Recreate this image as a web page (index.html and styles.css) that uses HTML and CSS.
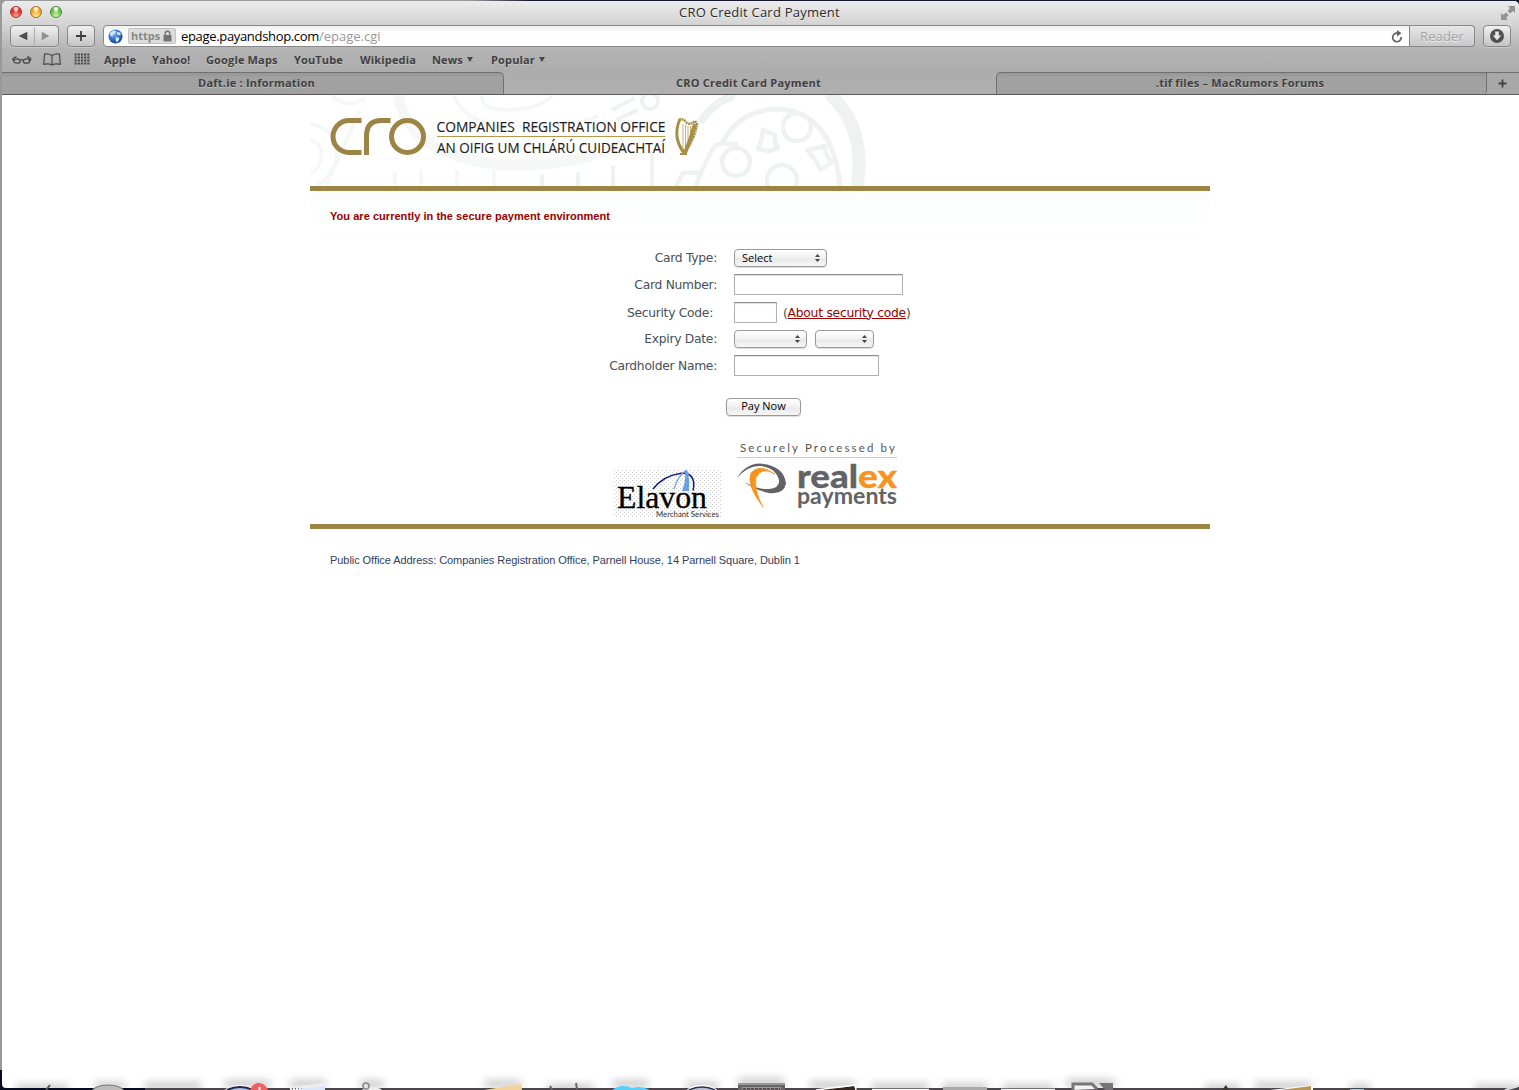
FILE: index.html
```html
<!DOCTYPE html>
<html lang="en">
<head>
<meta charset="utf-8">
<title>CRO Credit Card Payment</title>
<link rel="stylesheet" href="styles.css">
</head>
<body>
<div class="desktop">
<div class="window">
  <header class="chrome">
    <div class="titlebar">
      <div class="lights"><i class="light red"></i><i class="light amber"></i><i class="light green"></i></div>
      <div class="title">CRO Credit Card Payment</div>
      <svg class="expand" width="16" height="16" viewBox="0 0 16 16"><path d="M8 1h7v7l-2-2-3 2.500-2.500-2.500 2.500-3zM1 15V8l2 2 3-2.500L8.500 10 6 13l2 2z" fill="#929292"/></svg>
    </div>
    <div class="toolbar">
      <div class="btn nav">
        <svg width="49" height="20" viewBox="0 0 49 20"><path d="M8 10l9-4.500v9z" fill="#4c4c4c"/><path d="M24.500 1v18" stroke="#aaa"/><path d="M40 10l-8-4.500v9z" fill="#909090"/></svg>
      </div>
      <div class="btn add"><svg width="12" height="12" viewBox="0 0 12 12"><path d="M6 1v10M1 6h10" stroke="#3d3d3d" stroke-width="1.800"/></svg></div>
      <div class="address">
        <svg class="globe" width="15" height="15" viewBox="0 0 15 15"><defs><radialGradient id="gl" cx=".4" cy=".3" r=".75"><stop offset="0" stop-color="#8ab8ee"/><stop offset=".5" stop-color="#3478cf"/><stop offset="1" stop-color="#123a91"/></radialGradient></defs><circle cx="7.500" cy="7.500" r="7" fill="url(#gl)"/><path d="M2 4l3-2.500 3 .5-1 2.500-2 1-.5 2L2.500 7zM9 3l3 .5 1 2-2 1-2-1.500zM8 8l3.500 1-1 2.500-1.500 2L7.500 11z" fill="#d3e6fc"/></svg>
        <span class="secure">https <svg width="9" height="12" viewBox="0 0 9 12"><path d="M2.200 6V3.600a2.300 2.300 0 0 1 4.600 0V6" fill="none" stroke="#737373" stroke-width="1.400"/><rect x=".5" y="5" width="8" height="6.500" rx=".7" fill="#737373"/></svg></span>
        <span class="url">epage.payandshop.com<em>/epage.cgi</em></span>
        <svg class="reload" width="12" height="13" viewBox="0 0 12 13"><path d="M10.200 7A4.300 4.300 0 1 1 6.500 3.200" fill="none" stroke="#626262" stroke-width="1.700"/><path d="M6 0l4.500 3.200L6 6.400z" fill="#626262"/></svg>
      </div>
      <div class="reader">Reader</div>
      <div class="btn download"><svg width="16" height="16" viewBox="0 0 16 16"><circle cx="8" cy="8" r="7" fill="#515151"/><path d="M6.200 3.500h3.600v4h2.400L8 12.300 3.800 7.500h2.400z" fill="#e6e6e6"/></svg></div>
    </div>
    <nav class="bookmarks">
      <svg width="20" height="11" viewBox="0 0 20 11" fill="none" stroke="#484848" stroke-width="1.300"><ellipse cx="5" cy="7" rx="3.200" ry="2.200"/><ellipse cx="14.500" cy="7" rx="3.200" ry="2.200"/><path d="M8.300 6.200q1.500-1 3 0M1.700 6.500L.5 5.500Q2 3 4.500 3M17.800 6.500l1-1Q18 3 15 3"/></svg>
      <svg width="18" height="13" viewBox="0 0 18 13" fill="none" stroke="#484848" stroke-width="1.200"><path d="M9 2.500Q5 .3 1.500 1.200L.8 11.300Q5.500 10 9 12q3.500-2 8.200-.7L16.500 1.200Q13 .3 9 2.500zV12"/></svg>
      <svg width="16" height="12" viewBox="0 0 16 12"><path d="M.5 1.500h15M.5 4.500h15M.5 7.500h15M.5 10.500h15" stroke="#484848" stroke-width="2" stroke-dasharray="2.200 1"/></svg>
      <a>Apple</a><a>Yahoo!</a><a>Google Maps</a><a>YouTube</a><a>Wikipedia</a><a>News <b></b></a><a>Popular <b></b></a>
    </nav>
    <div class="tabs">
      <div class="tab left">Daft.ie : Information</div>
      <div class="tab active">CRO Credit Card Payment</div>
      <div class="tab right">.tif files – MacRumors Forums</div>
      <div class="tab plus"><svg width="9" height="9" viewBox="0 0 9 9"><path d="M4.500 .5v8M.5 4.500h8" stroke="#444" stroke-width="1.800"/></svg></div>
    </div>
  </header>
  <main class="page">
    <section class="banner">
      <svg width="900" height="91" viewBox="310 95 900 91">
        <g fill="none" stroke="#eef3f2">
          <g stroke-width="4" opacity=".55">
            <path d="M395 172v14M421 170v16M457 170v16M494 170v16"/>
            <path d="M310 124q26 4 27 30-2 20-20 32M310 140q14 4 11 20-2 10-11 14M360 110l-34 76M333 96q12 14 32 3"/>
            <path d="M454 96q10 26 48 30 60 4 96-10M482 96q0 14 25 14 30 0 45-14"/>
            <path d="M398 95q12 62 106 70 70 2 120-22" stroke-width="11"/>
          </g>
          <g stroke-width="4"><path d="M542 174v12M578 172v14M613 166v20M652 152v34M612 110l22-12M616 120l22-10"/><circle cx="650" cy="101" r="8"/></g>
          <path d="M829 93q38 36 28 93" stroke-width="13"/>
          <path d="M700 122q12-18 34-27" stroke-width="8"/>
          <path d="M676 186l7-13h18l-5 13M698 178l14-28q3-6 9-6h17" stroke-width="4.500"/>
          <path d="M722 144q15-32 52-35 58 0 66 77" stroke-width="5"/>
          <g stroke-width="4.500"><circle cx="797" cy="127" r="14"/><circle cx="736" cy="162" r="14"/><circle cx="782" cy="180" r="15"/><path d="M763 130l12 5q-1 7 3 13l-9 3-11-2q4-8 5-19zM807 150l18-4q0 10 7 16l-12 8q-3-10-13-20z" stroke-linejoin="round"/></g>
        </g>
        <g fill="none" stroke="#9c8544" stroke-width="5"><path d="M361.500 120.500H349a16 16 0 0 0 0 32h12.500M366.500 155v-19q0-15.500 15-15.500h9"/><circle cx="407.500" cy="136.500" r="16"/></g>
        <path d="M437 136.500h228.500" stroke="#b59a4e" stroke-width="1.200"/>
        <g class="cro-name"><text x="436.500" y="131.500" textLength="229" lengthAdjust="spacingAndGlyphs" xml:space="preserve">COMPANIES  REGISTRATION OFFICE</text><text x="437" y="152.500" textLength="228" lengthAdjust="spacingAndGlyphs">AN OIFIG UM CHLÁRÚ CUIDEACHTAÍ</text></g>
        <g fill="none" stroke="#a98f46"><path d="M680 119q-8 18 4 34" stroke-width="3"/><path d="M679 120q4-2 7 2t9-1l2 3q-2 14-12 28" stroke-width="2.500" stroke-dasharray="2 .6"/><path d="M695 124q-4 15-10 29" stroke-width="4"/><path d="M683 124v26M685.500 125v26M688 126v20M690.500 126v14" stroke-width=".7"/><path d="M680 154h7" stroke-width="2"/></g>
      </svg>
    </section>
    <p class="notice">You are currently in the secure payment environment</p>
    <form class="pay">
      <div class="fields">
        <label>Card Type:</label><div><span class="select type"><span>Select</span><svg width="5" height="8" viewBox="0 0 5 8"><path d="M2.500 0L5 3H0zM2.500 8L0 5h5z" fill="#454545"/></svg></span></div>
        <label>Card Number:</label><div><input class="number" type="text"></div>
        <label class="code-label">Security Code:</label><div><input class="code" type="text"><span class="about">(<a>About security code</a>)</span></div>
        <label>Expiry Date:</label><div><span class="select month"><span></span><svg width="5" height="8" viewBox="0 0 5 8"><path d="M2.500 0L5 3H0zM2.500 8L0 5h5z" fill="#454545"/></svg></span><span class="select year"><span></span><svg width="5" height="8" viewBox="0 0 5 8"><path d="M2.500 0L5 3H0zM2.500 8L0 5h5z" fill="#454545"/></svg></span></div>
        <label>Cardholder Name:</label><div><input class="holder" type="text"></div>
      </div>
      <button class="submit" type="button">Pay Now</button>
    </form>
    <div class="partners">
      <svg width="107" height="50" viewBox="614 469 107 50">
        <defs><pattern id="dots" width="4" height="4" patternUnits="userSpaceOnUse"><path d="M0 0h1v1H0zM2 2h1v1H2z" fill="#cdcdcd"/></pattern></defs>
        <rect x="614" y="469" width="107" height="49" fill="url(#dots)"/>
        <path d="M653 489q10-13 27-15.500 9-1 12 4 3 5 1 13" fill="none" stroke="#141b86" stroke-width="1.500"/>
        <path d="M674 489q4-14 13-19" fill="none" stroke="#6b9fe4" stroke-width="1.300"/>
        <path d="M684 471q3-2 4 1 2 9 1 19h-7q4-10 3-18z" fill="#6b9fe4"/>
        <text class="elavon" x="617" y="508" textLength="90" lengthAdjust="spacingAndGlyphs">Elavon</text>
        <text class="merchant" x="656" y="516.500" textLength="63" lengthAdjust="spacingAndGlyphs">Merchant Services</text>
      </svg>
      <svg width="162" height="72" viewBox="737 440 162 72">
        <text class="processed" x="740" y="452" textLength="156">Securely Processed by</text>
        <path d="M737 457.500h160" stroke="#ccc"/>
        <path d="M737 478q8-14 23-14.500 24 2 26 20-2 11-17 9.500-14-3-25-11 15 8 25 7 11-1 10-9-3-12-18-14-13-1-24 12z" fill="#626366"/>
        <path d="M775 474q-14-8-19 4-2 13 7 29-17-22-12-34 8-10 24 1z" fill="#f7931e" stroke="#f7931e" stroke-width=".7"/>
        <g class="realex"><text x="797" y="488" textLength="61" lengthAdjust="spacingAndGlyphs" fill="#626366" stroke="#626366">real</text><text x="858" y="488" textLength="39" lengthAdjust="spacingAndGlyphs" fill="#f7931e" stroke="#f7931e">ex</text></g>
        <text class="payments" x="797" y="504" textLength="100" lengthAdjust="spacingAndGlyphs">payments</text>
      </svg>
    </div>
    <footer class="footer">Public Office Address: Companies Registration Office, Parnell House, 14 Parnell Square, Dublin 1</footer>
  </main>
</div>
<svg class="dock" width="1519" height="30" viewBox="0 1060 1519 30">
  <defs><filter id="soft" x="-20%" y="-200%" width="140%" height="500%"><feGaussianBlur stdDeviation="4"/></filter></defs>
  <path d="M16 1088h52M95 1086h30M145 1086h56M225 1084h45M290 1084h36M360 1084h23M485 1084h36M548 1088h45M613 1084h35M686 1086h32M738 1082h46M810 1085h45M872 1087h56M943 1087h44M1003 1088h50M1067 1083h48M1205 1088h35M1255 1086h57M1350 1088h20M1475 1088h44" stroke="#777" stroke-width="5" opacity=".6" filter="url(#soft)"/>
  <path d="M0 1089h1519" stroke="#49474b" stroke-width="2"/>
  <path d="M0 1089h145" stroke="#080c22" stroke-width="2"/>
  <path d="M46 1090l4-5" stroke="#555" stroke-width="2"/>
  <ellipse cx="108" cy="1093" rx="17" ry="8" fill="#bcbcbc" stroke="#777"/>
  <ellipse cx="240" cy="1094" rx="16" ry="8" fill="#b4c0e8" stroke="#fff" stroke-width="2"/><path d="M227 1090q13-6 26 0" fill="none" stroke="#1c2647" stroke-width="2"/>
  <circle cx="259" cy="1092" r="9" fill="#f15d60"/><path d="M259.500 1087v3" stroke="#fff" stroke-width="2"/>
  <path d="M290 1090l35-5v5z" fill="#dce6fa"/><path d="M290 1089l35-5" stroke="#f4f4f4" stroke-width="3" stroke-dasharray="2 1"/>
  <ellipse cx="372" cy="1092" rx="11" ry="5" fill="#eee"/><circle cx="366" cy="1086" r="3" fill="none" stroke="#888" stroke-width="1.500"/>
  <path d="M484 1090l37-6 1 6z" fill="#f1d39a"/><path d="M550 1086l2 4M576 1083l1 6" stroke="#666" stroke-width="2"/>
  <path d="M612 1090q10-7 20-2 9-3 18 2z" fill="#55d1fa"/>
  <ellipse cx="702" cy="1094" rx="16" ry="8" fill="#b9bed0" stroke="#fff" stroke-width="2"/><path d="M689 1090q13-6 26 0" fill="none" stroke="#29304d" stroke-width="1.500"/>
  <path d="M738 1083h47v7h-47z" fill="#666"/><path d="M738 1084h47M742 1088h39" stroke="#c9cecc"/><path d="M743 1088.500h37" stroke="#543f3f" stroke-dasharray="3 1"/>
  <path d="M822 1090l32-4 2 4z" fill="#342621"/><path d="M816 1090l39-5 1 5" fill="none" stroke="#fff" stroke-width="1.500"/>
  <path d="M872 1089.500h57M1001 1089.500h54" stroke="#f5f5f5" stroke-width="1.500"/><path d="M943 1087h44v3h-44z" fill="#aaa"/>
  <path d="M1073 1090v-6h19l5 5" fill="#f4f4f4" stroke="#777" stroke-width="3"/><path d="M1099 1083h14v7h-8z" fill="#757575"/>
  <path d="M1222 1090l4-5 3 5z" fill="#403832"/><path d="M1270 1090l43-5v5z" fill="#fff"/><path d="M1280 1090l31-4v4z" fill="#b39858"/><path d="M1350 1089.500h14" stroke="#a8cbe4"/>
  <path d="M1505 1090l14-4" stroke="#ddd" stroke-width="2"/>
</svg>
</div>
</body>
</html>
```
FILE: styles.css
```css
* { box-sizing: border-box; }
body { margin: 0; overflow: hidden; background: #777; font-family: "Open Sans", "Noto Sans", sans-serif; }
.desktop { position: relative; height: 1090px; padding: 1px 0 2px 2px; background: linear-gradient(90deg, #9b9b9b 0 470px, #15182e 530px) 0 0 / 100% 5px no-repeat, linear-gradient(#999 0 1070px, #080c22 1070px); }
.window { height: 1087px; border-radius: 5px 5px 4px 4px; overflow: hidden; background: #fff; }
.chrome { height: 94px; background: linear-gradient(#ececec, #d4d4d4 23px, #b4b4b4 48px, #acacac 71px, #b0b0b0); }
.titlebar { height: 24px; display: grid; grid-template-columns: 60px 1fr 60px; align-items: center; }
.lights { display: flex; gap: 8px; padding-left: 8px; margin-top: -2px; }
.light { width: 12px; height: 12px; border-radius: 50%; border: 1px solid #a23b35; background: radial-gradient(ellipse at 50% 10%, #ffd8d6 0 18%, transparent 42%), radial-gradient(circle at 50% 95%, #ffaca0, #e5322f 55%); }
.amber { border-color: #a2702b; background: radial-gradient(ellipse at 50% 10%, #fff1cd 0 18%, transparent 42%), radial-gradient(circle at 50% 95%, #ffef8e, #eda330 60%); }
.green { border-color: #4b8840; background: radial-gradient(ellipse at 50% 10%, #e9ffe2 0 18%, transparent 42%), radial-gradient(circle at 50% 95%, #d4ff9f, #66bc50 60%); }
.title { text-align: center; font-size: 13px; line-height: 22px; letter-spacing: .24px; color: #2c2c2c; text-shadow: 0 1px #eee; padding: 0 2px 2px 0; }
.expand { justify-self: end; margin: -1px 3px 0 0; }
.toolbar { height: 23px; display: flex; padding-left: 8px; align-items: stretch; }
.btn { height: 22px; border: 1px solid #888; border-radius: 4px; background: linear-gradient(#f0f0f0, #c4c4c4); display: flex; align-items: center; justify-content: center; box-shadow: 0 1px #c9c9c9; }
.nav { width: 49px; }
.add { width: 28px; margin: 0 8px; }
.address { width: 1307px; height: 22px; display: flex; align-items: center; background: linear-gradient(#f3f3f3, #fff 8px); border: 1px solid #888; border-radius: 4px 0 0 4px; padding: 0 6px 0 4px; font-size: 13px; }
.secure { height: 16px; width: 48px; margin: 0 5px; padding-left: 2px; border: 1px solid #c2c2c2; border-radius: 2px; background: #ddd; font-size: 11px; line-height: 12px; font-weight: 700; color: #888; display: flex; align-items: center; gap: 3px; }
.url { color: #000; white-space: nowrap; letter-spacing: -.33px; }
.url em { font-style: normal; color: #999; letter-spacing: 0; }
.reload { margin-left: auto; }
.reader { width: 65px; height: 22px; border: 1px solid #888; border-left: 0; border-radius: 0 4px 4px 0; background: linear-gradient(#e6e6e6, #c8c8c8); color: #a3a3a3; text-shadow: 0 1px #eee; font-size: 13px; line-height: 20px; letter-spacing: .15px; text-align: center; }
.download { width: 28px; margin-left: 8px; }
.bookmarks { height: 23px; display: grid; grid-template-columns: 31px 31px 30px 48px 54px 88px 66px 72px 59px 60px; align-items: center; padding: 0 0 1px 10px; font-size: 11px; font-weight: 700; letter-spacing: .15px; color: #404040; text-shadow: 0 1px #c5c5c5; }
.bookmarks a { white-space: nowrap; }
.bookmarks b { display: inline-block; margin: 0 0 2px 1px; border: 3.5px solid transparent; border-top: 5px solid #444; border-bottom: 0; }
.tabs { height: 24px; padding-top: 1px; display: grid; grid-template-columns: 502px 492px 491px 1fr; font-size: 11px; font-weight: 700; letter-spacing: .22px; color: #404040; text-shadow: 0 1px #bfbfbf; border-bottom: 1px solid #5c585b; }
.tab { height: 22px; line-height: 20px; text-align: center; border-top: 1px solid #707070; background: linear-gradient(#969696, #a1a1a1 5px); padding-right: 1px; }
.tab.left { border-right: 1px solid #707070; border-radius: 0 5px 0 0; padding-left: 9px; }
.tab.active { border-color: transparent; background: none; padding-right: 3px; }
.tab.right { border-left: 1px solid #707070; border-right: 1px solid #707070; border-radius: 5px 0 4px 0; padding-right: 3px; }
.tab.plus { background: #a8a8a8; display: flex; align-items: center; justify-content: center; }
.page { width: 900px; margin-left: 308px; }
.banner { height: 96px; border-bottom: 5px solid #9c8544; }
.banner svg { display: block; }
.cro-name { font: 15px "Open Sans", sans-serif; fill: #1c1c1c; stroke: #1c1c1c; stroke-width: .15; }
.notice { height: 54px; margin: 0; padding: 19px 20px 0; background: linear-gradient(#fbfefd, #fff); color: #990000; font: bold 11px/13px "Liberation Sans", sans-serif; letter-spacing: .04px; }
.pay { font: 12.5px "DejaVu Sans", sans-serif; color: #475158; }
.fields { display: grid; grid-template-columns: 407px 1fr; grid-template-rows: 26px 27px 29px 24px 29px; column-gap: 17px; align-items: center; }
.fields label { text-align: right; white-space: nowrap; font-size: 12.3px; letter-spacing: -.28px; }
.fields .code-label { padding-right: 4px; }
.fields > div { display: flex; align-items: center; }
.fields input { height: 21px; border: 1px solid #b0b0b0; border-top-color: #8d8d8d; background: #fff; box-shadow: inset 0 1px 1px #e0e0e0; padding: 0; }
.number { width: 169px; }
.code { width: 43px; }
.holder { width: 145px; }
.about { margin-left: 6px; font-size: 12.3px; letter-spacing: -.24px; white-space: nowrap; }
.about a { color: #900; text-decoration: underline; }
.select { height: 18px; border: 1px solid #999; border-radius: 4px; background: linear-gradient(#fff, #f1f1f1 50%, #e8e8e8 55%, #f7f7f7); box-shadow: 0 1px 1px #ddd; display: flex; justify-content: space-between; align-items: center; padding: 0 6px 0 7px; font: 500 11px/14px "Open Sans", sans-serif; color: #000; }
.select span { padding-bottom: 1px; }
.type { width: 93px; }
.month { width: 73px; }
.year { width: 59px; margin-left: 8px; }
.submit { display: block; width: 75px; height: 18px; margin: 18px 0 0 416px; padding: 0 0 2px; border: 1px solid #999; border-radius: 4px; background: linear-gradient(#fff, #f1f1f1 50%, #e8e8e8 55%, #f7f7f7); box-shadow: 0 1px 1px #ddd; font: 500 11px/14px "Open Sans", sans-serif; color: #000; }
.partners { height: 113px; padding: 24px 0 0 304px; display: flex; gap: 16px; border-bottom: 5px solid #9c8544; }
.partners svg:first-child { margin-top: 29px; }
.elavon { font: 31px "Liberation Serif", serif; stroke: #000; stroke-width: .3; }
.merchant { font: 7px "Lato", sans-serif; fill: #333; }
.processed { font: 11.500px "Lato", sans-serif; fill: #555; letter-spacing: 1px; }
.realex { font: 900 33px "Lato", sans-serif; stroke-width: .3; }
.payments { font: bold 22px "Lato", sans-serif; fill: #626366; }
.footer { padding: 25px 20px 0; font: 11px/13px "Liberation Sans", sans-serif; letter-spacing: -.057px; color: #2f405c; }
.dock { position: absolute; left: 0; bottom: 0; }
```
